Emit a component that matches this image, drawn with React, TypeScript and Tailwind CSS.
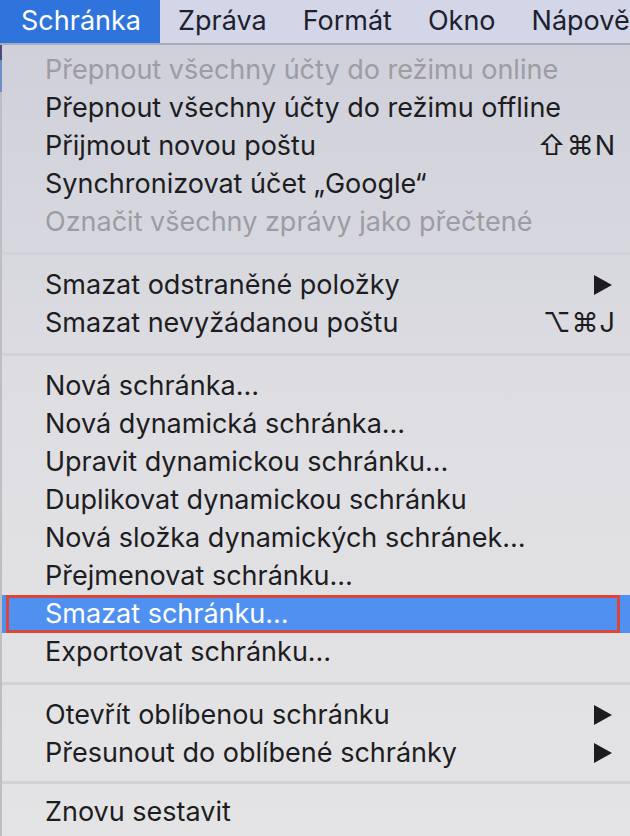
import { ReactNode } from 'react'

type Item =
  | { kind: 'item'; label: string; disabled?: boolean; shortcut?: ReactNode; submenu?: boolean; selected?: boolean }
  | { kind: 'sep'; small?: boolean }

const items: Item[] = [
  { kind: 'item', label: 'Přepnout všechny účty do režimu online', disabled: true },
  { kind: 'item', label: 'Přepnout všechny účty do režimu offline' },
  { kind: 'item', label: 'Přijmout novou poštu', shortcut: '⇧⌘N' },
  { kind: 'item', label: 'Synchronizovat účet „Google“' },
  { kind: 'item', label: 'Označit všechny zprávy jako přečtené', disabled: true },
  { kind: 'sep' },
  { kind: 'item', label: 'Smazat odstraněné položky', submenu: true },
  { kind: 'item', label: 'Smazat nevyžádanou poštu', shortcut: '⌥⌘J' },
  { kind: 'sep' },
  { kind: 'item', label: 'Nová schránka…' },
  { kind: 'item', label: 'Nová dynamická schránka…' },
  { kind: 'item', label: 'Upravit dynamickou schránku…' },
  { kind: 'item', label: 'Duplikovat dynamickou schránku' },
  { kind: 'item', label: 'Nová složka dynamických schránek…' },
  { kind: 'item', label: 'Přejmenovat schránku…' },
  { kind: 'item', label: 'Smazat schránku…', selected: true },
  { kind: 'item', label: 'Exportovat schránku…' },
  { kind: 'sep' },
  { kind: 'item', label: 'Otevřít oblíbenou schránku', submenu: true },
  { kind: 'item', label: 'Přesunout do oblíbené schránky', submenu: true },
  { kind: 'sep', small: true },
  { kind: 'item', label: 'Znovu sestavit' },
]

const menuBar = ['Zpráva', 'Formát', 'Okno', 'Nápověda']

function Arrow() {
  return (
    <svg width="18" height="20" viewBox="0 0 18 20" className="mr-[4px]">
      <path d="M0 0 L18 10 L0 20 Z" fill="#1d1d21" />
    </svg>
  )
}

export default function App() {
  return (
    <div
      className="w-[630px] h-[836px] overflow-hidden flex flex-col bg-[#e4e4e6]"
      style={{ fontFamily: 'Inter, "Noto Sans", sans-serif' }}
    >
      {/* menu bar */}
      <div className="h-[45px] shrink-0 flex items-stretch bg-[#d3d6e6] border-b-[2px] border-[#a9acbb] whitespace-nowrap overflow-hidden">
        <div className="bg-[#2f73dc] text-white text-[27px] flex items-center pl-[21px] pr-[20px] w-[160px] shrink-0">
          Schránka
        </div>
        {menuBar.map(m => (
          <div key={m} className="text-[#1e2030] text-[27px] flex items-center px-[18px] shrink-0">
            {m}
          </div>
        ))}
      </div>

      <div className="flex flex-1 min-h-0">
        {/* sliver of window behind */}
        <div className="w-[2px] shrink-0 flex flex-col">
          <div className="h-[15px] bg-[#4b4a78]" />
          <div className="h-[32px] bg-[#6c8fca]" />
          <div className="flex-1 bg-[#bdbdc2]" />
        </div>

        {/* menu */}
        <div className="flex-1 pt-[6px] bg-gradient-to-b from-[#cfd0da] via-[#dfdfe3] to-[#e4e4e6] text-[27px] leading-[38px] whitespace-nowrap">
          {items.map((it, i) =>
            it.kind === 'sep' ? (
              <div key={i} className={`${it.small ? 'h-[21px]' : 'h-[25px]'} flex items-center`}>
                <div className="h-[3px] w-full bg-[#d2d2d6]" />
              </div>
            ) : it.selected ? (
              <div key={i} className="h-[38px] bg-[#5090f0] pl-[4px] pr-[10px]">
                <div className="h-full border-[3px] border-[#d8463c] flex items-center pl-[36px] text-white">
                  {it.label}
                </div>
              </div>
            ) : (
              <div
                key={i}
                className={`h-[38px] flex items-center justify-between pl-[43px] pr-[14px] ${
                  it.disabled ? 'text-[#9c9ca2]' : 'text-[#1d1d21]'
                }`}
              >
                <span>{it.label}</span>
                {it.shortcut && <span className="tracking-[1px]">{it.shortcut}</span>}
                {it.submenu && <Arrow />}
              </div>
            )
          )}
        </div>
      </div>
    </div>
  )
}
